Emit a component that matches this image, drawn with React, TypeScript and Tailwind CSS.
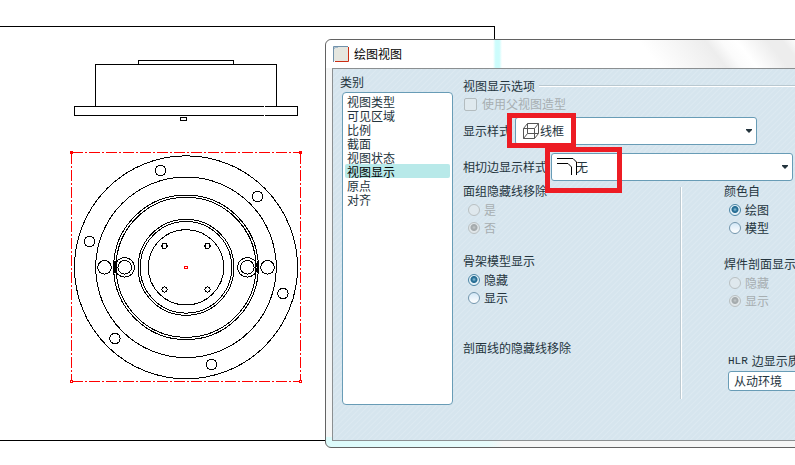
import type { ReactNode } from "react";

const categories = ["视图类型", "可见区域", "比例", "截面", "视图状态", "视图显示", "原点", "对齐"];

const boltHoles = [
  [160.5, 170.5],
  [89.5, 241.5],
  [257.5, 196.5],
  [283, 293.5],
  [115, 338.5],
  [211.5, 364.5],
];

const pinHoles = [
  [164.5, 246],
  [207.5, 246],
  [164.5, 289.5],
  [207.5, 289.5],
];

function Drawing() {
  return (
    <svg
      width="250"
      height="340"
      viewBox="60 50 250 340"
      fill="none"
      stroke="#000"
      shapeRendering="crispEdges"
      role="img"
      aria-label="法兰工程图"
    >
      <path d="M138.5 64V60.5H233.5V64" />
      <path d="M95.5 106V64.5H276.5V106" />
      <rect x="74.5" y="106.5" width="223" height="9" />
      <path d="M264.5 106V116" stroke="#fff" />
      <rect x="180.5" y="117.5" width="6" height="3" />

      {[111.5, 90.3, 72.3, 70, 48, 45.8, 37.7].map((r) => (
        <circle key={r} cx="186" cy="267.3" r={r} />
      ))}
      <path d="M114.5 261V273M257.5 261V273" strokeWidth="2" />
      {boltHoles.map(([x, y]) => (
        <circle key={`${x}-${y}`} cx={x} cy={y} r="5.2" />
      ))}
      {pinHoles.map(([x, y]) => (
        <circle key={`${x}-${y}`} cx={x} cy={y} r="2.6" />
      ))}
      {[104.5, 267.5].map((x) => (
        <circle key={x} cx={x} cy="267.3" r="6.8" />
      ))}
      {[124.7, 247.3].map((x) => (
        <g key={x}>
          <circle cx={x} cy="267.3" r="9.8" />
          <circle cx={x} cy="267.3" r="6.8" />
        </g>
      ))}

      <g stroke="#ff0000">
        <path d="M71.5 152.5H300.5" strokeDasharray="11 2 2 2" />
        <path d="M71.5 381.5H300.5" strokeDasharray="11 2 2 2" />
        <path d="M71.5 152.5V381.5" strokeDasharray="11 2 2 2" />
        <path d="M300.5 152.5V381.5" strokeDasharray="11 2 2 2" />
        <rect x="184.5" y="266.5" width="3" height="2" />
        <rect x="70.5" y="151.5" width="2" height="2" fill="#ff0000" />
        <rect x="299.5" y="151.5" width="2" height="2" fill="#ff0000" />
        <rect x="70.5" y="380.5" width="2" height="2" fill="#fff" />
        <rect x="299.5" y="380.5" width="2" height="2" fill="#fff" />
      </g>
    </svg>
  );
}

function WireframeIcon() {
  return (
    <svg width="16" height="16" viewBox="0 0 16 16" fill="none" stroke="#555" className="absolute top-[6px] left-2">
      <path d="M.5 5.5H11.5V15.5H.5ZM4.5 .5H15.5V10.5H4.5ZM.5 5.5L4.5 .5M11.5 5.5L15.5 .5M.5 15.5L4.5 10.5M11.5 15.5L15.5 10.5" />
    </svg>
  );
}

function TangentIcon() {
  return (
    <svg width="21" height="18" viewBox="0 0 21 18" fill="none" stroke="#000" className="absolute top-[5px] left-[6px]">
      <path d="M0 .5H16L19.5 4V17" />
      <path d="M0 5.5H11L14.5 9V17" />
    </svg>
  );
}

function Heading({ children }: { children: ReactNode }) {
  return <legend className="block whitespace-nowrap pb-[2px] leading-4">{children}</legend>;
}

function Radio({ name, label, checked, disabled }: { name: string; label: string; checked?: boolean; disabled?: boolean }) {
  return (
    <label className={`ml-[5px] flex h-[18px] items-center gap-1 ${disabled ? "text-[#a7aeb1]" : ""}`}>
      <input
        type="radio"
        name={name}
        defaultChecked={checked}
        disabled={disabled}
        className="size-3 appearance-none rounded-full border border-[#7396ad] bg-[linear-gradient(#d3e8f7,#ffffff)] checked:border-[#4d86a5] checked:bg-[radial-gradient(circle_at_50%_45%,#8fc3dc_0,#2d7399_2px,#226a91_3px,#e4f1f8_4px,#e4f1f8_5px)] disabled:border-[#b9c0c2] disabled:bg-[#dfe8ed] disabled:bg-none disabled:checked:bg-[radial-gradient(circle_at_50%_45%,#c5cacc_0,#a5abad_2px,#a5abad_3px,#e0e6e9_4px)]"
      />
      {label}
    </label>
  );
}

function StyleSelect({ id, label, value, icon, mark }: { id: string; label: string; value: string; icon: ReactNode; mark: string }) {
  return (
    <div className="flex items-center gap-1">
      <label htmlFor={id} className="whitespace-nowrap">
        {label}
      </label>
      <div className="relative w-[242px] shrink-0">
        <select
          id={id}
          className="block h-7 w-full appearance-none rounded-[3px] border border-[#689cb6] bg-white pr-5 pl-6"
        >
          <option>{value}</option>
        </select>
        {icon}
        <svg width="6" height="4" viewBox="0 0 6 4" fill="#24343d" className="absolute top-3 right-[5px]">
          <path d="M0 0H6V1L3 4L0 1Z" />
        </svg>
        <div className={`pointer-events-none absolute border-[5px] border-[#ed1c24] ${mark}`} />
      </div>
    </div>
  );
}

function Dialog() {
  return (
    <section
      aria-label="绘图视图"
      className="absolute top-[39px] right-[-24px] left-[325px] rounded-l-md border border-[#626262] bg-[#f5f6f6] bg-[linear-gradient(90deg,#dcfbfb_0,#e6fbfb_33%,#f5f6f6_36%)] bg-size-[100%_10px] bg-bottom bg-no-repeat pb-[6px] pl-[6px] text-[#24343d]"
    >
      <header className="-ml-[6px] flex h-7 items-center gap-1 rounded-tl-md bg-[linear-gradient(52deg,#ffffff_65%,#ededed_78%,#fbfbfb_81%,#ffffff_84%,#ededed_90%,#ededed_93%,#ffffff_96%)] pl-[7px]">
        <svg width="17" height="17" viewBox="0 0 17 17">
          <rect x="1" y="1" width="14" height="14" fill="#e5e6df" />
          <path d="M.5 16V.5H15" stroke="#7191aa" fill="none" />
          <path d="M1.5 3V1.5H5" stroke="#a7bccd" fill="none" />
          <path d="M15.5 1V15.5H2" stroke="#cb2d13" fill="none" />
        </svg>
        <h1 className="text-black">绘图视图</h1>
        <span className="ml-[87px] h-full w-[9px] bg-[linear-gradient(90deg,#ffffff,#ccfcfc_30%,#ccfcfc_70%,#ffffff)]" />
      </header>

      <form className="flex border-t border-b border-l border-[#8b8f91] bg-[#d8e6ef] bg-[repeating-linear-gradient(135deg,#d6e5ee_0,#d6e5ee_2px,#dce9f1_3px,#d6e5ee_4px)]">
        <div className="shrink-0 pt-[5px] pr-[10px] pb-[35px] pl-[7px]">
          <label htmlFor="category" className="block leading-4">
            类别
          </label>
          <select
            id="category"
            size={8}
            defaultValue="视图显示"
            className="mt-[2px] ml-[2px] block h-[313px] w-[111px] appearance-none overflow-hidden rounded-[4px] border border-[#689cb6] bg-white px-[2px] py-px"
          >
            {categories.map((name) => (
              <option
                key={name}
                className="flex h-[14px] min-h-0 items-center rounded-[2px] p-0 pl-[2px] text-[#24343d] checked:bg-[linear-gradient(#b8e9e9,#b8e9e9)] checked:text-black"
              >
                {name}
              </option>
            ))}
          </select>
        </div>

        <fieldset className="min-w-0 flex-1">
          <legend className="flex w-full items-center gap-1 pt-[9px] leading-4">
            <span className="shrink-0">视图显示选项</span>
            <span className="h-[2px] flex-1 border-t border-[#b9c8d0] bg-white" />
          </legend>
          <label className="mt-[2px] flex h-4 items-center gap-[5px] pl-px text-[#a7aeb1]">
            <input
              type="checkbox"
              disabled
              className="size-[13px] appearance-none rounded-[2px] border border-[#b3bcbf] bg-[#dfe9ee]"
            />
            使用父视图造型
          </label>
          <div className="mt-[5px] flex flex-col gap-2">
            <StyleSelect
              id="display-style"
              label="显示样式"
              value="线框"
              icon={<WireframeIcon />}
              mark="-top-1 -left-2 h-[35px] w-[69px]"
            />
            <StyleSelect
              id="tangent-style"
              label="相切边显示样式"
              value="无"
              icon={<TangentIcon />}
              mark="-top-[6px] -left-[6px] h-[46px] w-[77px]"
            />
          </div>

          <div className="mt-[2px] flex">
            <div className="w-[217px] shrink-0">
              <fieldset>
                <Heading>面组隐藏线移除</Heading>
                <Radio name="quilt" label="是" disabled />
                <Radio name="quilt" label="否" checked disabled />
              </fieldset>
              <fieldset className="mt-4">
                <Heading>骨架模型显示</Heading>
                <Radio name="skeleton" label="隐藏" checked />
                <Radio name="skeleton" label="显示" />
              </fieldset>
              <p className="mt-[33px] leading-4">剖面线的隐藏线移除</p>
            </div>
            <div className="mt-1 mr-[42px] h-[212px] w-[2px] shrink-0 border-l border-[#bccad2] bg-white" />
            <div className="shrink-0">
              <fieldset>
                <Heading>颜色自</Heading>
                <Radio name="color" label="绘图" checked />
                <Radio name="color" label="模型" />
              </fieldset>
              <fieldset className="mt-[19px]">
                <Heading>焊件剖面显示</Heading>
                <Radio name="weld" label="隐藏" disabled />
                <Radio name="weld" label="显示" checked disabled />
              </fieldset>
              <div className="mt-[43px] ml-1">
                <label htmlFor="hlr" className="flex h-[18px] gap-1 leading-4">
                  <span className="font-['Liberation_Mono',monospace] text-[11px] leading-4">HLR</span>
                  <span>边显示质量</span>
                </label>
                <select
                  id="hlr"
                  className="block h-5 w-[120px] appearance-none rounded-[3px] border border-[#689cb6] bg-white pl-[5px]"
                >
                  <option>从动环境</option>
                </select>
              </div>
            </div>
          </div>
        </fieldset>
      </form>
    </section>
  );
}

export default function App() {
  return (
    <main className="relative h-screen w-full overflow-hidden bg-white pt-[26px] font-['Noto_Sans_CJK_SC',sans-serif] text-[12px]">
      <div className="h-[415px] w-[495px] border-t border-r border-b border-black pt-[23px] pl-[60px]">
        <Drawing />
      </div>
      <Dialog />
    </main>
  );
}
